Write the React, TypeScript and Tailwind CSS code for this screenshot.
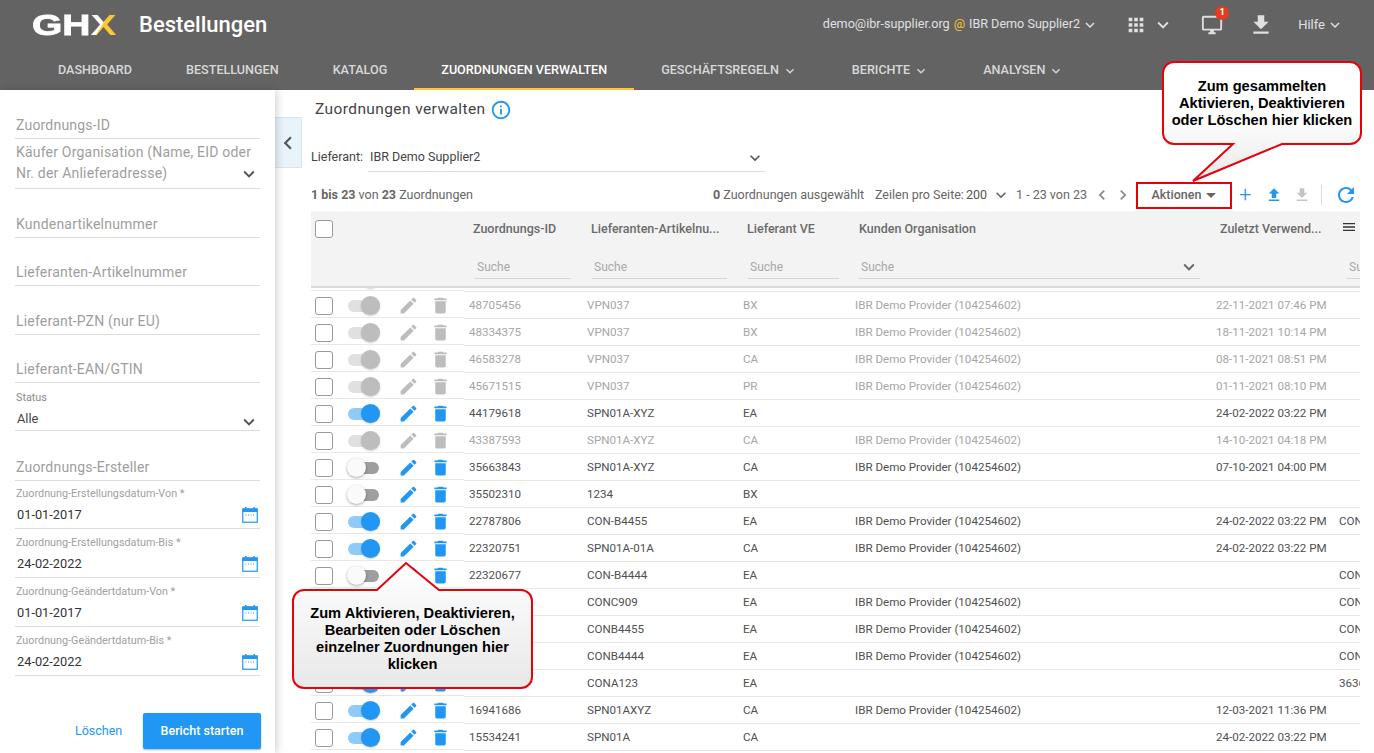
import {
  MdApps,
  MdDelete,
  MdEdit,
  MdFileDownload,
  MdFileUpload,
  MdInfoOutline,
  MdKeyboardArrowDown,
  MdKeyboardArrowLeft,
  MdKeyboardArrowRight,
  MdMenu,
  MdOutlineDesktopWindows,
  MdRefresh,
} from "react-icons/md";

type State = "disabled" | "on" | "off";
type Row = {
  id?: string;
  art?: string;
  ve?: string;
  org?: boolean;
  date?: string;
  extra?: string;
  state: State;
};

// first row is scrolled almost out of view, ids of 12-15 sit behind the callout
const rows: Row[] = [
  { state: "disabled" },
  { id: "48705456", art: "VPN037", ve: "BX", org: true, date: "22-11-2021 07:46 PM", state: "disabled" },
  { id: "48334375", art: "VPN037", ve: "BX", org: true, date: "18-11-2021 10:14 PM", state: "disabled" },
  { id: "46583278", art: "VPN037", ve: "CA", org: true, date: "08-11-2021 08:51 PM", state: "disabled" },
  { id: "45671515", art: "VPN037", ve: "PR", org: true, date: "01-11-2021 08:10 PM", state: "disabled" },
  { id: "44179618", art: "SPN01A-XYZ", ve: "EA", date: "24-02-2022 03:22 PM", state: "on" },
  { id: "43387593", art: "SPN01A-XYZ", ve: "CA", org: true, date: "14-10-2021 04:18 PM", state: "disabled" },
  { id: "35663843", art: "SPN01A-XYZ", ve: "CA", org: true, date: "07-10-2021 04:00 PM", state: "off" },
  { id: "35502310", art: "1234", ve: "BX", state: "off" },
  { id: "22787806", art: "CON-B4455", ve: "EA", org: true, date: "24-02-2022 03:22 PM", extra: "CON", state: "on" },
  { id: "22320751", art: "SPN01A-01A", ve: "CA", org: true, date: "24-02-2022 03:22 PM", state: "on" },
  { id: "22320677", art: "CON-B4444", ve: "EA", extra: "CON", state: "off" },
  { art: "CONC909", ve: "EA", org: true, extra: "CON", state: "on" },
  { art: "CONB4455", ve: "EA", org: true, extra: "CON", state: "on" },
  { art: "CONB4444", ve: "EA", org: true, extra: "CON", state: "on" },
  { art: "CONA123", ve: "EA", extra: "3636", state: "on" },
  { id: "16941686", art: "SPN01AXYZ", ve: "CA", org: true, date: "12-03-2021 11:36 PM", state: "on" },
  { id: "15534241", art: "SPN01A", ve: "CA", date: "24-02-2022 03:22 PM", state: "on" },
];

function Toggle({ state }: { state: State }) {
  if (state === "off") {
    return (
      <div className="flex h-3 w-[31px] items-center rounded-full bg-[#9e9e9e]">
        <div className="-ml-[1px] h-[19px] w-[19px] shrink-0 rounded-full bg-[#fafafa] shadow-[0_1px_3px_rgba(0,0,0,0.35)]" />
      </div>
    );
  }
  const on = state === "on";
  return (
    <div className={`flex h-3 w-[32px] items-center justify-end rounded-full ${on ? "bg-[#90caf9]" : "bg-[#e0e0e0]"}`}>
      <div className={`h-[19px] w-[19px] shrink-0 rounded-full shadow-[0_1px_2px_rgba(0,0,0,0.2)] ${on ? "bg-[#2196f3]" : "bg-[#bdbdbd]"}`} />
    </div>
  );
}

function CheckBox() {
  return <div className="h-[18px] w-[18px] shrink-0 rounded-[3px] border border-[#9a9a9a] bg-white" />;
}

function CalendarIcon() {
  return (
    <svg viewBox="0 0 16 16" className="h-4 w-4 shrink-0">
      <rect x="0.75" y="2" width="14.5" height="13.25" fill="#fff" stroke="#2196f3" strokeWidth="1.2" />
      <rect x="0.5" y="1.5" width="15" height="3.5" fill="#2196f3" />
      <rect x="3" y="0" width="1.5" height="2" fill="#2196f3" />
      <rect x="11.5" y="0" width="1.5" height="2" fill="#2196f3" />
      <path d="M3.5 8h1M6 8h1M8.5 8h1M11 8h1" stroke="#2196f3" strokeWidth="1" />
    </svg>
  );
}

function TextField({ label, h }: { label: string; h: string }) {
  return (
    <div className={`flex items-end border-b border-[#dcdcdc] pb-[2px] pl-px text-[14px] tracking-[0.2px] text-[#9e9e9e] ${h}`}>
      {label}
    </div>
  );
}

function DateField({ label, value, h }: { label: string; value: string; h: string }) {
  return (
    <div className={`flex flex-col justify-end border-b border-[#dcdcdc] pb-[5px] ${h}`}>
      <div className="pl-px text-[10.8px] leading-[14px] text-[#a0a0a0]">{label} *</div>
      <div className="mt-[6px] flex items-center justify-between pl-[2px] pr-[2px] text-[12.8px] leading-4 text-[#333]">
        {value}
        <CalendarIcon />
      </div>
    </div>
  );
}

function Sidebar() {
  return (
    <aside className="z-10 flex h-[663px] w-[275px] shrink-0 flex-col bg-white pl-[15px] pr-[15px] shadow-[2px_0_8px_rgba(0,0,0,0.18)]">
      <TextField label="Zuordnungs-ID" h="h-[49px]" />
      <div className="flex h-[50px] items-end justify-between border-b border-[#dcdcdc] pb-[4px] pl-px text-[14px] leading-[21px] tracking-[0.2px] text-[#9e9e9e]">
        <div className="whitespace-nowrap">
          Käufer Organisation (Name, EID oder
          <br />
          Nr. der Anlieferadresse)
        </div>
        <MdKeyboardArrowDown size={22} className="-ml-[14px] mb-[-1px] shrink-0 text-[#555]" />
      </div>
      <TextField label="Kundenartikelnummer" h="h-[49px]" />
      <TextField label="Lieferanten-Artikelnummer" h="h-[48px]" />
      <TextField label="Lieferant-PZN (nur EU)" h="h-[49px]" />
      <TextField label="Lieferant-EAN/GTIN" h="h-[48px]" />
      <div className="flex h-[48px] flex-col justify-end border-b border-[#dcdcdc] pb-[3px]">
        <div className="pl-px text-[10.8px] leading-[14px] text-[#8a8a8a]">Status</div>
        <div className="mt-[6px] flex h-4 items-center justify-between pl-[2px] text-[12.8px] leading-4 text-[#444]">
          Alle
          <MdKeyboardArrowDown size={22} className="mt-[5px] text-[#555]" />
        </div>
      </div>
      <TextField label="Zuordnungs-Ersteller" h="h-[50px]" />
      <DateField label="Zuordnung-Erstellungsdatum-Von" value="01-01-2017" h="h-[48px]" />
      <DateField label="Zuordnung-Erstellungsdatum-Bis" value="24-02-2022" h="h-[49px]" />
      <DateField label="Zuordnung-Geändertdatum-Von" value="01-01-2017" h="h-[49px]" />
      <DateField label="Zuordnung-Geändertdatum-Bis" value="24-02-2022" h="h-[49px]" />
      <div className="mt-[37px] flex items-center">
        <span className="ml-[60px] w-[47px] shrink-0 whitespace-nowrap text-[12.5px] text-[#2196f3]">Löschen</span>
        <button className="ml-[21px] h-9 w-[118px] shrink-0 rounded-[2px] bg-[#2196f3] text-[12.5px] font-medium text-white shadow-[0_1px_2px_rgba(0,0,0,0.3)]">
          Bericht starten
        </button>
      </div>
    </aside>
  );
}

function Header() {
  return (
    <header className="h-[90px] bg-[#636363] text-[#e0e0e0]">
      <div className="flex h-[51px] items-center pb-[2px] pl-[32px]">
        <div className="mt-[1px] w-[86px] origin-left scale-x-[1.3] whitespace-nowrap font-['Liberation_Sans',sans-serif] text-[30px] font-bold leading-none text-white [-webkit-text-stroke:0.8px]">
          GH
          <span className="bg-[linear-gradient(115deg,#fff_47%,#fdc82f_48%)] bg-clip-text text-transparent [-webkit-text-stroke:0]">X</span>
        </div>
        <div className="ml-[21px] text-[22px] font-medium text-white">Bestellungen</div>
        <div className="ml-auto flex items-center text-[12.6px]">
          <span>demo@ibr-supplier.org</span>
          <span className="mx-1 text-[#fdc82f]">@</span>
          <span>IBR Demo Supplier2</span>
          <MdKeyboardArrowDown size={18} className="ml-[1px]" />
          <MdApps size={22} className="ml-[26px]" />
          <MdKeyboardArrowDown size={22} className="ml-[5px]" />
          <div className="relative ml-[27px]">
            <MdOutlineDesktopWindows size={22} />
            <div className="absolute -right-[6px] -top-[8px] flex h-[14px] w-[14px] items-center justify-center rounded-full bg-[#e53a21] text-[9.5px] font-bold text-white">1</div>
          </div>
          <MdFileDownload size={26} className="ml-[25px]" />
          <span className="ml-[24px] text-[13px]">Hilfe</span>
          <MdKeyboardArrowDown size={18} className="ml-[1px] mr-[30px]" />
        </div>
      </div>
      <nav className="flex h-[39px] pl-[31px] text-[12.6px] font-medium uppercase text-[#d8d8d8]">
        <NavItem label="Dashboard" />
        <NavItem label="Bestellungen" />
        <NavItem label="Katalog" />
        <NavItem label="Zuordnungen verwalten" active />
        <NavItem label="Geschäftsregeln" menu />
        <NavItem label="Berichte" menu />
        <NavItem label="Analysen" menu />
      </nav>
    </header>
  );
}

function NavItem({ label, active, menu }: { label: string; active?: boolean; menu?: boolean }) {
  return (
    <div className={`flex items-center whitespace-nowrap border-b-2 px-[27px] pt-[2px] ${active ? "border-[#fdc82f] text-white" : "border-transparent"}`}>
      {label}
      {menu && <MdKeyboardArrowDown size={16} className="ml-[3px]" />}
    </div>
  );
}

function PinnedRow({ state }: { state: State }) {
  const color = state === "disabled" ? "text-[#bdbdbd]" : "text-[#2196f3]";
  return (
    <div className="flex h-[27px] items-center border-b border-[#e8e8e8] pl-1 pt-[3px]">
      <CheckBox />
      <div className="ml-[15px] w-[32px]">
        <Toggle state={state} />
      </div>
      <MdEdit size={21} className={`ml-[18px] ${color}`} />
      <MdDelete size={21} className={`ml-[11px] ${color}`} />
    </div>
  );
}

function DataRow({ row }: { row: Row }) {
  const color = row.state === "disabled" ? "text-[#a6a6a6]" : "text-[#505050]";
  return (
    <div className={`flex h-[27px] items-center whitespace-nowrap border-b border-[#e8e8e8] pt-[1px] text-[11.6px] ${color}`}>
      <div className="w-[118px] shrink-0 pl-[5px]">{row.id}</div>
      <div className="w-[156px] shrink-0 pl-[5px]">{row.art}</div>
      <div className="w-[112px] shrink-0 pl-[5px]">{row.ve}</div>
      <div className="w-[361px] shrink-0 pl-[5px]">{row.org ? "IBR Demo Provider (104254602)" : ""}</div>
      <div className="w-[123px] shrink-0 pl-[5px]">{row.date}</div>
      <div className="shrink-0 pl-[5px]">{row.extra}</div>
    </div>
  );
}

function SearchCell({ w, ml, chevron }: { w: string; ml: string; chevron?: boolean }) {
  return (
    <div className={`flex h-[27px] shrink-0 items-center justify-between border-b border-[#d6d6d6] pl-[2px] pt-[3px] text-[12px] text-[#a8a8a8] ${w} ${ml}`}>
      Suche
      {chevron && <MdKeyboardArrowDown size={22} className="text-[#666]" />}
    </div>
  );
}

function HeadCell({ label, w }: { label: string; w: string }) {
  return <div className={`shrink-0 truncate pl-[9px] ${w}`}>{label}</div>;
}

function Table() {
  return (
    <div className="mt-[2px] h-[542px] w-[1049px] overflow-hidden">
      <div className="flex h-[77px] border-b-2 border-[#dadada] bg-[#f3f3f3]">
        <div className="w-[153px] shrink-0 pl-1 pt-[9px]">
          <CheckBox />
        </div>
        <div className="min-w-0 flex-1 overflow-hidden">
          <div className="flex h-[36px] items-center whitespace-nowrap text-[12.5px] font-medium text-[#6b6b6b]">
            <HeadCell label="Zuordnungs-ID" w="w-[118px]" />
            <HeadCell label="Lieferanten-Artikelnu..." w="w-[156px]" />
            <HeadCell label="Lieferant VE" w="w-[112px]" />
            <HeadCell label="Kunden Organisation" w="w-[361px]" />
            <HeadCell label="Zuletzt Verwend..." w="w-[123px]" />
            <MdMenu size={16} className="-mt-1 ml-[7px] shrink-0 text-[#333]" />
          </div>
          <div className="mt-[5px] flex">
            <SearchCell w="w-[96px]" ml="ml-[11px]" />
            <SearchCell w="w-[135px]" ml="ml-[21px]" />
            <SearchCell w="w-[91px]" ml="ml-[21px]" />
            <SearchCell w="w-[341px]" ml="ml-[20px]" chevron />
            <SearchCell w="w-[60px]" ml="ml-[147px]" />
          </div>
        </div>
      </div>
      <div className="flex h-[465px] overflow-hidden">
        <div className="-mt-[24px] w-[153px] shrink-0">
          {rows.map((r, i) => (
            <PinnedRow key={i} state={r.state} />
          ))}
        </div>
        <div className="-mt-[23px] min-w-0 flex-1 overflow-hidden">
          {rows.map((r, i) => (
            <DataRow key={i} row={r} />
          ))}
        </div>
      </div>
    </div>
  );
}

function Callouts() {
  return (
    <>
      <div className="absolute left-[1162px] top-[61px] z-20 flex h-[84px] w-[200px] items-center justify-center text-center font-['Liberation_Sans',sans-serif] text-[14.65px] font-bold leading-[17px] text-black">
        <svg viewBox="0 0 200 84" className="absolute left-0 top-0 h-[84px] w-[200px] overflow-visible">
          <defs>
            <linearGradient id="cg1" x1="0" y1="0" x2="0" y2="1">
              <stop offset="0" stopColor="#ffffff" />
              <stop offset="0.45" stopColor="#ffffff" />
              <stop offset="1" stopColor="#e8e8e8" />
            </linearGradient>
          </defs>
          <path
            d="M12 1H188a11 11 0 0 1 11 11V72a11 11 0 0 1-11 11H120L31 120L71 83H12a11 11 0 0 1-11-11V12a11 11 0 0 1 11-11Z"
            fill="url(#cg1)"
            stroke="#e8000b"
            strokeWidth="2"
          />
        </svg>
        <div className="relative whitespace-nowrap">
          Zum gesammelten
          <br />
          Aktivieren, Deaktivieren
          <br />
          oder Löschen hier klicken
        </div>
      </div>
      <div className="absolute left-[292px] top-[589px] z-20 flex h-[100px] w-[241px] items-center justify-center text-center font-['Liberation_Sans',sans-serif] text-[14.65px] font-bold leading-[17px] text-black">
        <svg viewBox="0 0 241 100" className="absolute left-0 top-0 h-[100px] w-[241px] overflow-visible">
          <defs>
            <linearGradient id="cg2" x1="0" y1="0" x2="0" y2="1">
              <stop offset="0" stopColor="#ffffff" />
              <stop offset="1" stopColor="#e8e8e8" />
            </linearGradient>
          </defs>
          <path
            d="M12 1H85L114-26L147 1H229a11 11 0 0 1 11 11V88a11 11 0 0 1-11 11H12a11 11 0 0 1-11-11V12a11 11 0 0 1 11-11Z"
            fill="url(#cg2)"
            stroke="#e8000b"
            strokeWidth="2"
          />
        </svg>
        <div className="relative w-[222px]">
          Zum Aktivieren, Deaktivieren, Bearbeiten oder Löschen einzelner Zuordnungen hier klicken
        </div>
      </div>
    </>
  );
}

export default function App() {
  return (
    <div className="relative h-[753px] overflow-hidden bg-white font-['Roboto',sans-serif]">
      <Header />
      <div className="flex">
        <Sidebar />
        <main className="relative min-w-0 flex-1 pl-[36px]">
          <div className="absolute left-0 top-[27px] flex h-[51px] w-[27px] items-center justify-center border border-l-0 border-[#d9e6f0] bg-[#e9f3fb] text-[#555]">
            <MdKeyboardArrowLeft size={26} />
          </div>
          <div className="flex h-[38px] items-center pl-[4px] pt-[2px] text-[15.5px] tracking-[0.4px] text-[#444]">
            Zuordnungen verwalten
            <MdInfoOutline size={22} className="ml-[5px] text-[#2196f3]" />
          </div>
          <div className="mt-[15px] flex h-[29px] w-[454px] items-center text-[12.5px] text-[#444]">
            Lieferant:
            <div className="ml-[5px] flex h-full flex-1 items-center justify-between border-b border-[#dcdcdc] pl-[2px] pt-[1px]">
              IBR Demo Supplier2
              <MdKeyboardArrowDown size={20} className="text-[#555]" />
            </div>
          </div>
          <div className="mt-[9px] flex h-[28px] w-[1049px] items-center whitespace-nowrap text-[12.5px] text-[#666]">
            <div className="w-[163px] shrink-0">
              <b className="font-bold">1 bis 23</b> von <b className="font-bold">23</b> Zuordnungen
            </div>
            <div className="ml-[239px] w-[153px] shrink-0">
              <b className="font-bold">0</b> Zuordnungen ausgewählt
            </div>
            <div className="ml-[9px] w-[91px] shrink-0">Zeilen pro Seite:</div>
            <div className="w-[24px] shrink-0 text-[#555]">200</div>
            <MdKeyboardArrowDown size={20} className="ml-[1px] shrink-0" />
            <div className="ml-[5px] w-[72px] shrink-0">1 - 23 von 23</div>
            <MdKeyboardArrowLeft size={20} className="ml-[4px] shrink-0 text-[#888]" />
            <MdKeyboardArrowRight size={20} className="ml-[1px] shrink-0 text-[#888]" />
            <div className="ml-[3px] flex h-[27px] w-[96px] shrink-0 items-center justify-center gap-[5px] border-2 border-[#e8000b] font-medium">
              Aktionen
              <svg viewBox="0 0 10 5" className="h-[5px] w-[10px]">
                <path d="M0 0h10L5 5Z" fill="#666" />
              </svg>
            </div>
            <div className="ml-[7px] text-[22px] font-light leading-none text-[#2196f3]">+</div>
            <MdFileUpload size={18} className="ml-[14px] shrink-0 text-[#2196f3]" />
            <MdFileDownload size={18} className="ml-[10px] shrink-0 text-[#c4c4c4]" />
            <div className="ml-[10px] h-5 w-px shrink-0 bg-[#dcdcdc]" />
            <MdRefresh size={24} className="ml-[12px] shrink-0 text-[#2196f3]" />
          </div>
          <Table />
        </main>
      </div>
      <Callouts />
    </div>
  );
}
